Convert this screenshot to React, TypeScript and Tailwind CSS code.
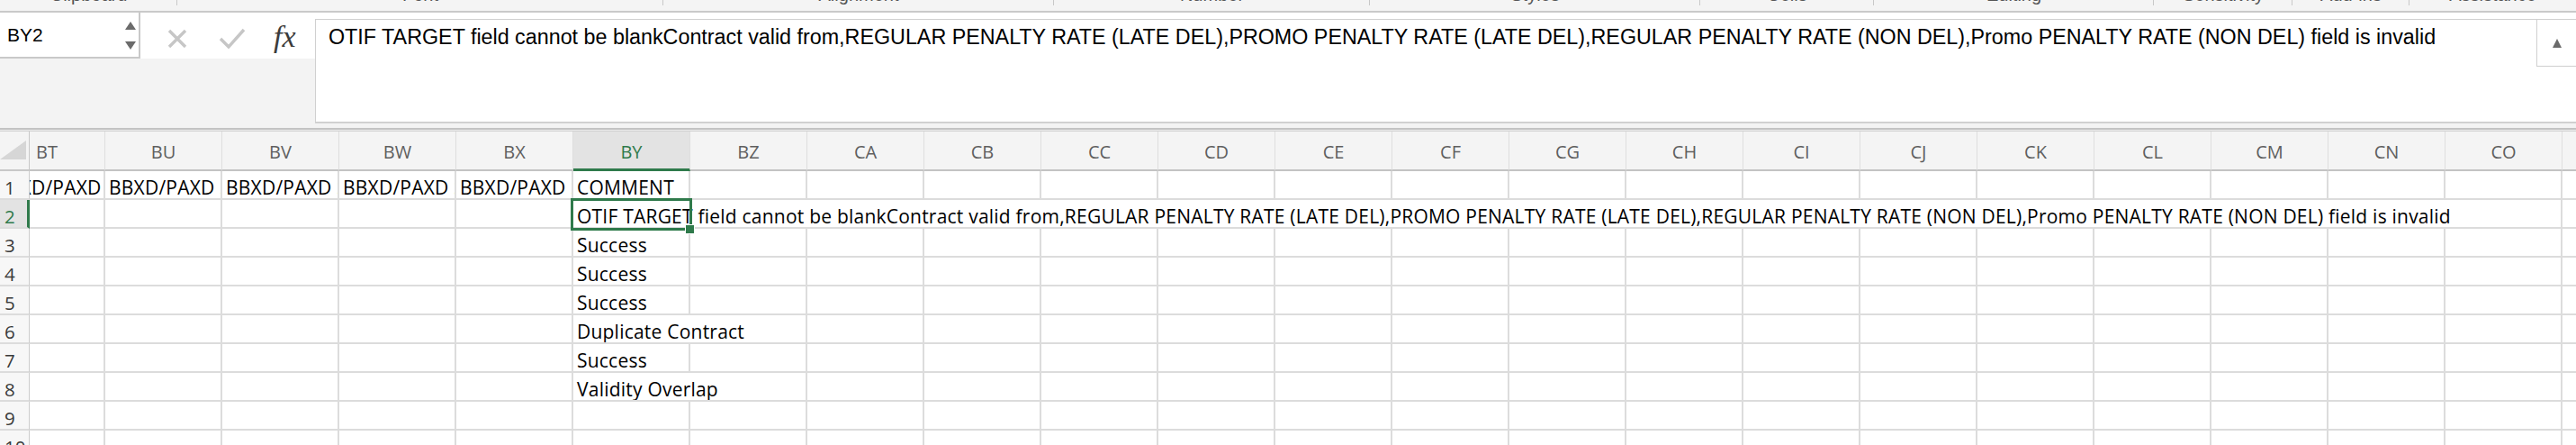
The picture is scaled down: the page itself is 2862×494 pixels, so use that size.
import React from "react";

const UI = '"Liberation Sans", Arial, sans-serif';
const CELL = '"Open Sans", "Noto Sans", sans-serif';

const cols = ["BU","BV","BW","BX","BY","BZ","CA","CB","CC","CD","CE","CF","CG","CH","CI","CJ","CK","CL","CM","CN","CO"];

const groups: { label: string; w: number }[] = [
  { label: "Clipboard", w: 197 },
  { label: "Font", w: 540 },
  { label: "Alignment", w: 434 },
  { label: "Number", w: 351 },
  { label: "Styles", w: 367 },
  { label: "Cells", w: 193 },
  { label: "Editing", w: 311 },
  { label: "Sensitivity", w: 154 },
  { label: "Add-ins", w: 130 },
  { label: "Assistance", w: 185 },
];

const LONG =
  "OTIF TARGET field cannot be blankContract valid from,REGULAR PENALTY RATE (LATE DEL),PROMO PENALTY RATE (LATE DEL),REGULAR PENALTY RATE (NON DEL),Promo PENALTY RATE (NON DEL) field is invalid";

const comments: Record<number, string> = {
  1: "COMMENT",
  3: "Success",
  4: "Success",
  5: "Success",
  6: "Duplicate Contract",
  7: "Success",
  8: "Validity Overlap",
};

function Cell({ w, children, last }: { w: number; children?: React.ReactNode; last?: boolean }) {
  return (
    <div
      className={`h-[32px] shrink-0 overflow-hidden whitespace-nowrap border-b-2 border-[#dcdcdc] ${last ? "" : "border-r-2"} pl-[4px] pt-[5px] leading-[26px] text-[21px] tracking-[0.22px] text-black`}
      style={{ width: w }}
    >
      {children}
    </div>
  );
}

function Row({ n }: { n: number }) {
  const sel = n === 2;
  const cells: React.ReactNode[] = [];
  cells.push(
    <Cell key="bt" w={84}>
      {n === 1 ? <span className="ml-[-42px]">BBXD/PAXD SKU</span> : null}
    </Cell>
  );
  for (let i = 0; i < 4; i++) {
    cells.push(<Cell key={"c" + i} w={130}>{n === 1 ? "BBXD/PAXD SKU" : null}</Cell>);
  }
  if (n === 2) {
    cells.push(<Cell key="by" w={130 * 17}>{LONG}</Cell>);
  } else if (n === 6 || n === 8) {
    cells.push(<Cell key="by" w={260}>{comments[n]}</Cell>);
    for (let i = 0; i < 15; i++) cells.push(<Cell key={"d" + i} w={130} />);
  } else {
    cells.push(<Cell key="by" w={130}>{comments[n] ?? null}</Cell>);
    for (let i = 0; i < 16; i++) cells.push(<Cell key={"d" + i} w={130} />);
  }
  cells.push(<Cell key="cp" w={15} last />);
  return (
    <div className="flex h-[32px]">
      <div
        className={`w-[33px] shrink-0 h-[32px] border-b-2 border-[#dcdcdc] ${sel ? "bg-[#e3e3e3] text-[#2f7a4b] border-r-[3px] border-r-[#2f7a4b]" : "bg-[#f7f7f7] text-[#3a3a3a] border-r border-r-[#cccccc]"} pl-[5px] pt-[5px] leading-[26px] text-[20.5px] overflow-hidden`}
      >
        {n}
      </div>
      {cells}
    </div>
  );
}

export default function App() {
  return (
    <div className="relative w-[2862px] h-[494px] overflow-hidden bg-white" style={{ fontFamily: UI }}>
      {/* ribbon group labels (cut off) */}
      <div className="flex h-[12px] bg-[#f4f4f4] overflow-hidden">
        {groups.map((g, i) => (
          <div key={g.label} className="relative shrink-0 h-[12px] flex justify-center" style={{ width: g.w }}>
            <span className="mt-[-16px] text-[20px] leading-[20px] text-[#555]">{g.label}</span>
            {i < groups.length - 1 && <div className="absolute right-0 top-0 h-[6px] w-px bg-[#c8c8c8]" />}
          </div>
        ))}
      </div>
      <div className="h-[2px] bg-[#c9c9c9]" />

      {/* formula bar */}
      <div className="flex h-[128px]">
        <div className="w-[350px] shrink-0 flex flex-col">
          <div className="flex h-[51px] bg-white">
            <div className="relative w-[156px] h-[51px] bg-white border-r-2 border-b-2 border-[#c9c9c9] pl-[8px] pt-[13px] text-[21px] leading-[24px] text-black">
              BY2
              <svg className="absolute right-[2px] top-[9px]" width="14" height="34" viewBox="0 0 14 34">
                <path d="M7 1 L13 10 L1 10 Z" fill="#6b6b6b" />
                <path d="M1 23 L13 23 L7 32 Z" fill="#6b6b6b" />
              </svg>
            </div>
            <div className="flex-1 flex items-center">
              <svg className="ml-[29px] mt-[6px]" width="24" height="22" viewBox="0 0 24 22">
                <path d="M3 2 L21 20 M21 2 L3 20" stroke="#c6c6c6" strokeWidth="3.4" strokeLinecap="butt" />
              </svg>
              <svg className="ml-[34px] mt-[6px]" width="30" height="24" viewBox="0 0 30 24">
                <path d="M2 12 L11 21 L28 2" stroke="#c6c6c6" strokeWidth="3.4" fill="none" />
              </svg>
              <span
                className="ml-[31px] mt-[2px] text-[34px] leading-[34px] italic text-[#3c3c3c]"
                style={{ fontFamily: '"Liberation Serif", "Times New Roman", serif' }}
              >
                fx
              </span>
            </div>
          </div>
          <div className="flex-1 bg-[#f3f3f3]" />
        </div>
        <div className="flex-1 flex flex-col bg-white">
          <div className="h-[7px] bg-white" />
          <div className="flex-1 flex border-t border-l border-b-2 border-[#d0d0d0]">
            <div className="flex-1 pl-[14px] pt-[6px] text-[23.3px] leading-[26px] text-black whitespace-nowrap overflow-hidden">
              {LONG}
            </div>
            <div className="w-[44px] h-[52px] border-l border-b border-[#cfcfcf] bg-white flex items-center justify-center">
              <svg width="12" height="12" viewBox="0 0 12 12">
                <path d="M6 1 L11 11 L1 11 Z" fill="#6b6b6b" />
              </svg>
            </div>
          </div>
          <div className="h-[5px] bg-[#f3f3f3]" />
        </div>
      </div>

      {/* separator double line */}
      <div className="h-[2px] bg-[#c3c3c3]" />
      <div className="h-[1px] bg-[#ececec]" />
      <div className="h-[1px] bg-[#d0d0d0]" />

      {/* sheet */}
      <div style={{ fontFamily: CELL }}>
        <div className="flex h-[44px] bg-[#f4f4f4]">
          <div className="w-[33px] shrink-0 h-[44px] border-r border-b-2 border-[#c8c8c8] relative">
            <svg className="absolute left-0 top-[10px]" width="29" height="21" viewBox="0 0 29 21">
              <path d="M29 0 L29 21 L0 21 Z" fill="#d6d6d6" />
            </svg>
          </div>
          <div className="w-[84px] shrink-0 h-[44px] border-r border-r-[#dedede] border-b-2 border-b-[#c3c3c3] pl-[7px] pt-[11px] text-[20px] leading-[24px] text-[#5f5f5f]">
            BT
          </div>
          {cols.map((c) => {
            const s = c === "BY";
            return (
              <div
                key={c}
                className={`w-[130px] shrink-0 h-[44px] border-r border-r-[#dedede] ${s ? "bg-[#e3e3e3] text-[#2f7a4b] border-b-[3px] border-b-[#2f7a4b]" : "text-[#5f5f5f] border-b-2 border-b-[#c3c3c3]"} flex justify-center pt-[11px] text-[20px] leading-[24px]`}
              >
                {c}
              </div>
            );
          })}
          <div className="flex-1 h-[44px] border-b-2 border-b-[#c3c3c3]" />
        </div>
        {[1, 2, 3, 4, 5, 6, 7, 8, 9, 10].map((n) => (
          <Row key={n} n={n} />
        ))}
      </div>

      {/* selection box over BY2 */}
      <div className="absolute left-[634px] top-[220px] w-[135px] h-[36px] border-[3px] border-[#2f7a4b] pointer-events-none" />
      <div className="absolute left-[761px] top-[249px] w-[11px] h-[11px] bg-[#2f7a4b] border border-white" />
    </div>
  );
}
